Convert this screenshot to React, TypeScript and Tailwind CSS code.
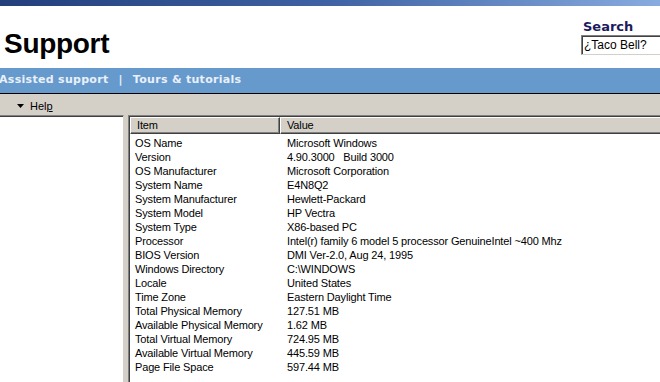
import React from 'react';

const rows: [string, string][] = [
  ['OS Name', 'Microsoft Windows'],
  ['Version', '4.90.3000   Build 3000'],
  ['OS Manufacturer', 'Microsoft Corporation'],
  ['System Name', 'E4N8Q2'],
  ['System Manufacturer', 'Hewlett-Packard'],
  ['System Model', 'HP Vectra'],
  ['System Type', 'X86-based PC'],
  ['Processor', 'Intel(r) family 6 model 5 processor GenuineIntel ~400 Mhz'],
  ['BIOS Version', 'DMI Ver-2.0, Aug 24, 1995'],
  ['Windows Directory', 'C:\\WINDOWS'],
  ['Locale', 'United States'],
  ['Time Zone', 'Eastern Daylight Time'],
  ['Total Physical Memory', '127.51 MB'],
  ['Available Physical Memory', '1.62 MB'],
  ['Total Virtual Memory', '724.95 MB'],
  ['Available Virtual Memory', '445.59 MB'],
  ['Page File Space', '597.44 MB'],
];

const SysInfoList: React.FC = () => {
  return (
    <div className="flex-1 bg-white border-t border-l border-[#808080] shadow-[inset_1px_1px_0_#404040] pt-px pl-px">
      <div className="flex h-[17px] text-[11px] tracking-[-0.15px] text-black">
        <div className="w-[150px] flex items-center pl-[6px] bg-[#d4d0c8] border-t border-l border-white border-b border-b-[#404040] border-r border-r-[#404040] shadow-[inset_-1px_-1px_0_#808080]">
          Item
        </div>
        <div className="flex-1 flex items-center pl-[6px] bg-[#d4d0c8] border-t border-l border-white border-b border-b-[#404040] shadow-[inset_0_-1px_0_#808080]">
          Value
        </div>
      </div>
      <div className="pt-[2px] text-[11px] tracking-[-0.15px] text-black">
        {rows.map(([item, value]) => (
          <div key={item} className="flex h-[14px] items-center leading-none">
            <div className="w-[150px] pl-[5px] whitespace-nowrap">{item}</div>
            <div className="flex-1 pl-[7px] whitespace-pre">{value}</div>
          </div>
        ))}
      </div>
    </div>
  );
};

export default function App() {
  return (
    <div className="w-[660px] h-[382px] overflow-hidden bg-white flex flex-col font-['Liberation_Sans',Arial,sans-serif]">
      <div className="h-[6px] shrink-0 bg-gradient-to-r from-[#233f7c] via-[#3f62a4] to-[#88acdf]" />
      <div className="h-[62px] shrink-0 flex justify-between">
        <h1 className="mt-[24px] pl-[4px] text-[28px] leading-none font-bold tracking-[-0.3px] text-black">
          Support
        </h1>
        <div className="w-[79px] pt-[14px] flex flex-col">
          <span className="pl-[2px] font-['DejaVu_Sans',Verdana,sans-serif] font-bold text-[13px] leading-none text-[#1b1b5e]">
            Search
          </span>
          <div className="mt-[2px] h-[20px] w-[90px] flex items-center pl-[2px] border border-t-[#808080] border-l-[#808080] border-b-[#d4d0c8] border-r-[#d4d0c8] shadow-[inset_1px_1px_0_#404040] text-[12px] text-black">
            ¿Taco Bell?
          </div>
        </div>
      </div>
      <nav className="h-[25px] shrink-0 bg-[#6699cc] flex items-center font-['DejaVu_Sans',Verdana,sans-serif] font-bold text-[11px] text-[#eaf0f9] tracking-[0.3px]">
        <span className="-ml-px">Assisted support</span>
        <span className="mx-[10px]">|</span>
        <span>Tours &amp; tutorials</span>
      </nav>
      <div className="h-px shrink-0 bg-black" />
      <div className="h-[21px] shrink-0 bg-[#d4d0c8] flex items-center pt-[3px] pl-[17px] text-[11px] text-black">
        <svg width="7" height="4" viewBox="0 0 7 4" className="mr-[6px]">
          <polygon points="0,0 7,0 3.5,4" fill="#000" />
        </svg>
        <span>
          Hel<span className="underline">p</span>
        </span>
      </div>
      <div className="flex-1 flex bg-[#d4d0c8]">
        <div className="w-[124px] bg-white border-t border-[#808080] border-r border-r-[#d4d0c8] shadow-[inset_0_1px_0_#404040]" />
        <div className="w-[4px]" />
        <SysInfoList />
      </div>
    </div>
  );
}
